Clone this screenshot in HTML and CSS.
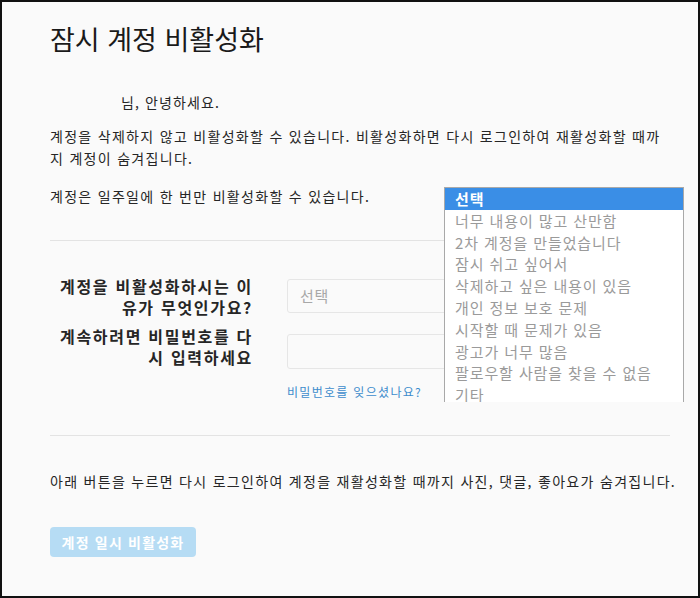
FILE: index.html
```html
<!DOCTYPE html>
<html lang="ko">
<head>
<meta charset="utf-8">
<title>잠시 계정 비활성화</title>
<link rel="stylesheet" href="styles.css">
</head>
<body>
<div class="page">
  <h1 class="title">잠시 계정 비활성화</h1>
  <p class="greeting"><span class="username"></span>님, 안녕하세요.</p>
  <p class="para first">계정을 삭제하지 않고 비활성화할 수 있습니다. 비활성화하면 다시 로그인하여 재활성화할 때까<br>지 계정이 숨겨집니다.</p>
  <p class="para second">계정은 일주일에 한 번만 비활성화할 수 있습니다.</p>
  <hr class="rule">
  <div class="form">
    <div class="row row-reason">
      <label class="label">계정을 비활성화하시는 이<br>유가 무엇인가요?</label>
      <div class="field">
        <div class="select">선택</div>
      </div>
    </div>
    <div class="row row-pass">
      <label class="label">계속하려면 비밀번호를 다<br>시 입력하세요</label>
      <div class="field">
        <div class="input"></div>
        <a class="forgot" href="#">비밀번호를 잊으셨나요?</a>
      </div>
    </div>
  </div>
  <hr class="rule rule2">
  <p class="para notice">아래 버튼을 누르면 다시 로그인하여 계정을 재활성화할 때까지 사진, 댓글, 좋아요가 숨겨집니다.</p>
  <button class="btn" type="button">계정 일시 비활성화</button>

  <ul class="dropdown">
    <li class="opt active">선택</li>
    <li class="opt">너무 내용이 많고 산만함</li>
    <li class="opt">2차 계정을 만들었습니다</li>
    <li class="opt">잠시 쉬고 싶어서</li>
    <li class="opt">삭제하고 싶은 내용이 있음</li>
    <li class="opt">개인 정보 보호 문제</li>
    <li class="opt">시작할 때 문제가 있음</li>
    <li class="opt">광고가 너무 많음</li>
    <li class="opt">팔로우할 사람을 찾을 수 없음</li>
    <li class="opt">기타</li>
  </ul>
</div>
</body>
</html>
```
FILE: styles.css
```css
html, body {
  margin: 0;
  padding: 0;
}
body {
  font-family: "Noto Sans CJK KR", "Noto Sans", sans-serif;
  color: #262626;
}
.page {
  box-sizing: border-box;
  width: 700px;
  height: 598px;
  border: 2px solid #111;
  background: #fafafa;
  position: relative;
  overflow: hidden;
  padding: 0 14px 0 48px;
}
.title {
  margin: 0;
  padding-top: 20px;
  font-size: 27px;
  line-height: 34px;
  font-weight: 400;
  color: #1a1a1a;
}
.greeting {
  margin: 35px 0 0;
  font-size: 14px;
  line-height: 22px;
  letter-spacing: 1.1px;
}
.username {
  display: inline-block;
  width: 71px;
}
.para {
  margin: 0;
  font-size: 14px;
  line-height: 22px;
  letter-spacing: 1.3px;
  white-space: nowrap;
}
.first { margin-top: 12px; }
.second { margin-top: 16px; }
.rule {
  border: 0;
  border-top: 1px solid #e3e3e3;
  margin: 33px 14px 0 0;
  height: 0;
}
.form {
  display: flex;
  flex-direction: column;
  gap: 8px;
  margin-top: 35px;
}
.row {
  display: flex;
  gap: 34px;
}
.label {
  width: 203px;
  flex: none;
  text-align: right;
  font-size: 16px;
  line-height: 21px;
  letter-spacing: 1.7px;
  font-weight: 700;
  color: #262626;
  white-space: nowrap;
}
.field {
  display: flex;
  flex-direction: column;
}
.select, .input {
  box-sizing: border-box;
  width: 355px;
  height: 34px;
  border: 1px solid #e6e6e6;
  border-radius: 3px;
  background: #fafafa;
}
.select {
  margin-top: 3px;
  padding-left: 12px;
  font-size: 15px;
  line-height: 32px;
  letter-spacing: 0.8px;
  color: #a8a8a8;
}
.input {
  margin-top: 8px;
  height: 35px;
}
.forgot {
  margin-top: 14px;
  font-size: 12px;
  line-height: 18px;
  letter-spacing: 1.3px;
  color: #3d8ccc;
  text-decoration: none;
}
.rule2 {
  margin-top: 34px;
}
.notice {
  margin-top: 34px;
}
.btn {
  margin-top: 35px;
  width: 146px;
  height: 30px;
  border: 0;
  border-radius: 4px;
  background: #b6dcf4;
  color: #fff;
  font-family: inherit;
  font-size: 14px;
  font-weight: 700;
  letter-spacing: 1.2px;
  padding: 0;
}
.dropdown {
  position: absolute;
  left: 442px;
  top: 185px;
  width: 240px;
  height: 215px;
  margin: 0;
  padding: 0;
  list-style: none;
  background: #fff;
  border: 1px solid #a9a9a9;
  border-bottom: 0;
  box-sizing: border-box;
  overflow: hidden;
}
.opt {
  height: 21.8px;
  line-height: 21.8px;
  padding-left: 10px;
  font-size: 15px;
  letter-spacing: 0.9px;
  color: #9a9a9a;
  white-space: nowrap;
}
.opt.active {
  background: #3a8ee6;
  color: #fff;
  font-weight: 700;
}
```
